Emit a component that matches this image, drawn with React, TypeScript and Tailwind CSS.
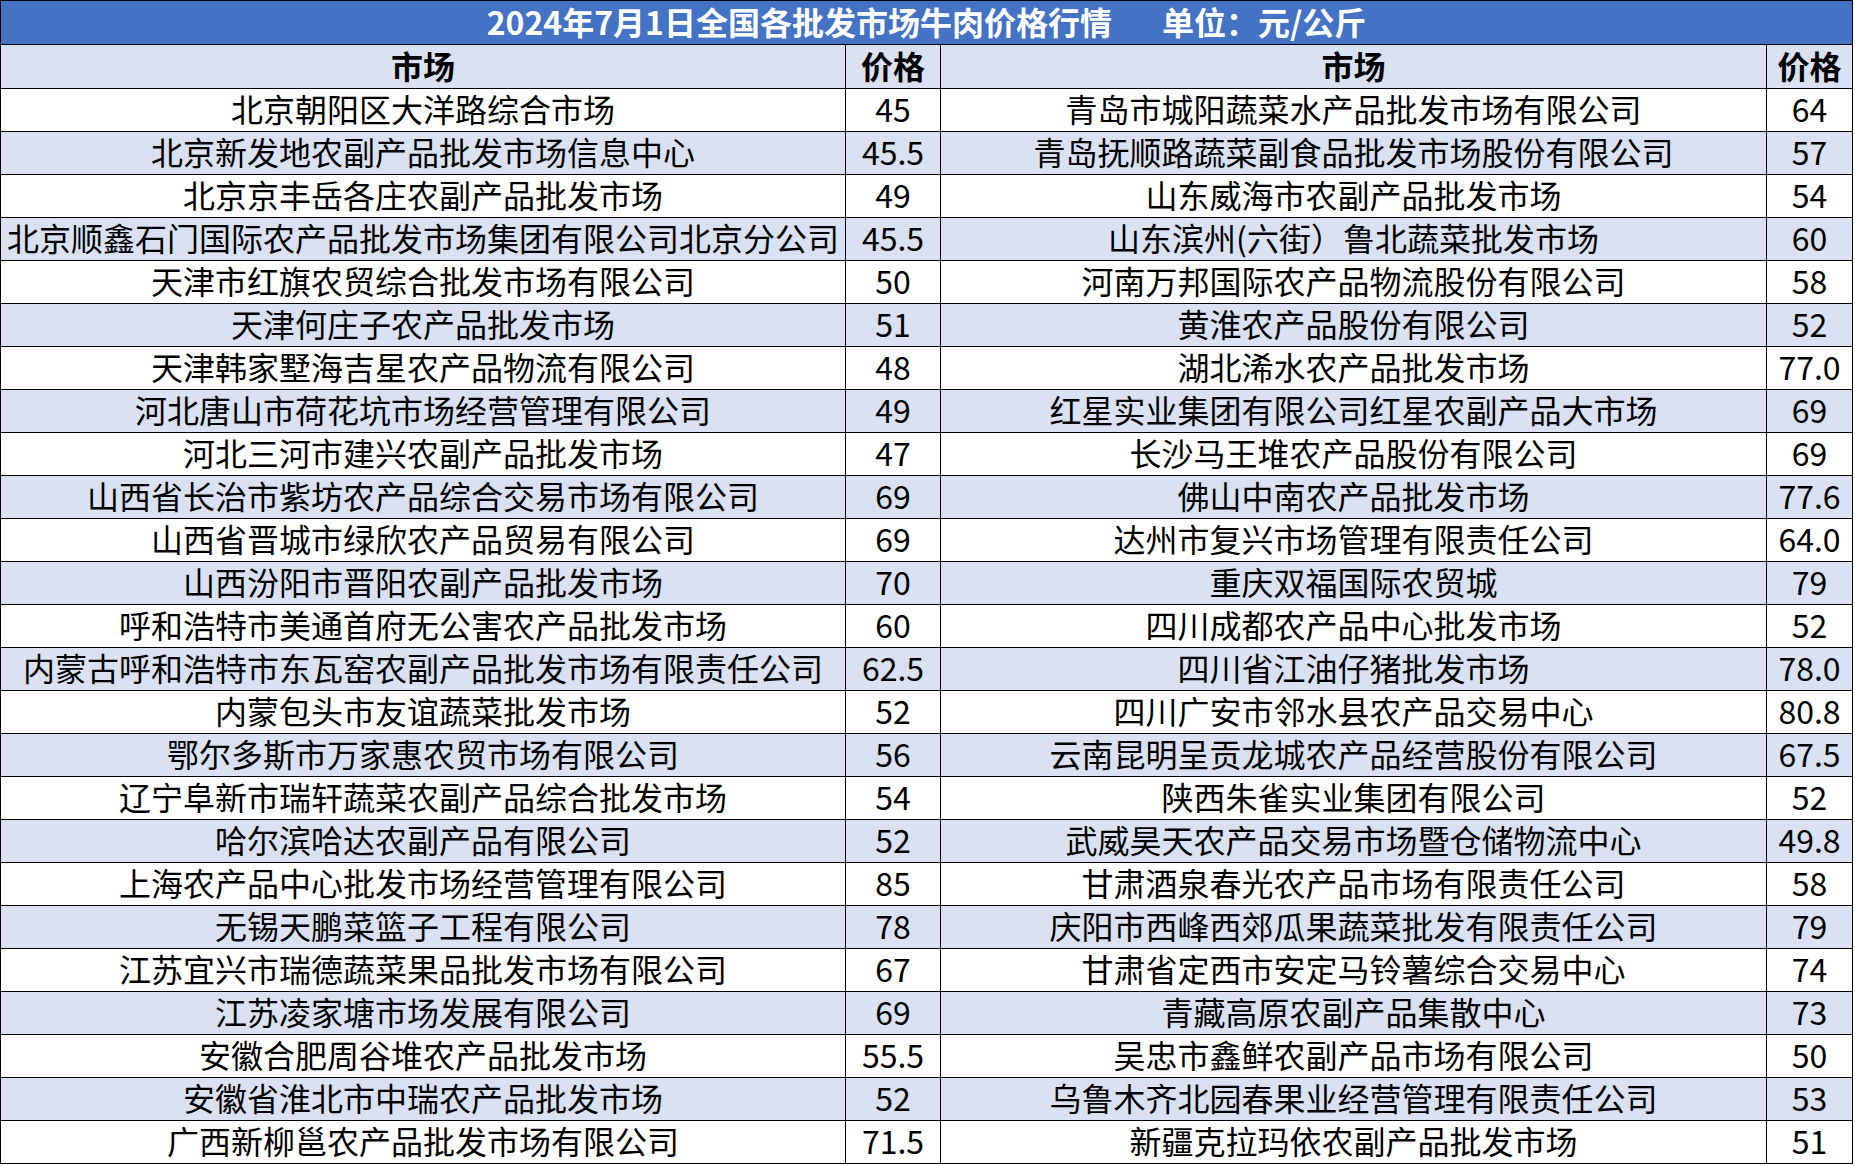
const rows: [string, string, string, string][] = [
  ['北京朝阳区大洋路综合市场', '45', '青岛市城阳蔬菜水产品批发市场有限公司', '64'],
  ['北京新发地农副产品批发市场信息中心', '45.5', '青岛抚顺路蔬菜副食品批发市场股份有限公司', '57'],
  ['北京京丰岳各庄农副产品批发市场', '49', '山东威海市农副产品批发市场', '54'],
  ['北京顺鑫石门国际农产品批发市场集团有限公司北京分公司', '45.5', '山东滨州(六街）鲁北蔬菜批发市场', '60'],
  ['天津市红旗农贸综合批发市场有限公司', '50', '河南万邦国际农产品物流股份有限公司', '58'],
  ['天津何庄子农产品批发市场', '51', '黄淮农产品股份有限公司', '52'],
  ['天津韩家墅海吉星农产品物流有限公司', '48', '湖北浠水农产品批发市场', '77.0'],
  ['河北唐山市荷花坑市场经营管理有限公司', '49', '红星实业集团有限公司红星农副产品大市场', '69'],
  ['河北三河市建兴农副产品批发市场', '47', '长沙马王堆农产品股份有限公司', '69'],
  ['山西省长治市紫坊农产品综合交易市场有限公司', '69', '佛山中南农产品批发市场', '77.6'],
  ['山西省晋城市绿欣农产品贸易有限公司', '69', '达州市复兴市场管理有限责任公司', '64.0'],
  ['山西汾阳市晋阳农副产品批发市场', '70', '重庆双福国际农贸城', '79'],
  ['呼和浩特市美通首府无公害农产品批发市场', '60', '四川成都农产品中心批发市场', '52'],
  ['内蒙古呼和浩特市东瓦窑农副产品批发市场有限责任公司', '62.5', '四川省江油仔猪批发市场', '78.0'],
  ['内蒙包头市友谊蔬菜批发市场', '52', '四川广安市邻水县农产品交易中心', '80.8'],
  ['鄂尔多斯市万家惠农贸市场有限公司', '56', '云南昆明呈贡龙城农产品经营股份有限公司', '67.5'],
  ['辽宁阜新市瑞轩蔬菜农副产品综合批发市场', '54', '陕西朱雀实业集团有限公司', '52'],
  ['哈尔滨哈达农副产品有限公司', '52', '武威昊天农产品交易市场暨仓储物流中心', '49.8'],
  ['上海农产品中心批发市场经营管理有限公司', '85', '甘肃酒泉春光农产品市场有限责任公司', '58'],
  ['无锡天鹏菜篮子工程有限公司', '78', '庆阳市西峰西郊瓜果蔬菜批发有限责任公司', '79'],
  ['江苏宜兴市瑞德蔬菜果品批发市场有限公司', '67', '甘肃省定西市安定马铃薯综合交易中心', '74'],
  ['江苏凌家塘市场发展有限公司', '69', '青藏高原农副产品集散中心', '73'],
  ['安徽合肥周谷堆农产品批发市场', '55.5', '吴忠市鑫鲜农副产品市场有限公司', '50'],
  ['安徽省淮北市中瑞农产品批发市场', '52', '乌鲁木齐北园春果业经营管理有限责任公司', '53'],
  ['广西新柳邕农产品批发市场有限公司', '71.5', '新疆克拉玛依农副产品批发市场', '51'],
];

const cell = 'border border-black p-0 pb-[4px] text-center whitespace-nowrap';

export default function App() {
  return (
    <div className="bg-white min-h-screen font-['Noto_Sans_CJK_SC','Noto_Sans',sans-serif] text-black">
      <table className="table-fixed border-collapse w-[1852px] leading-none">
        <colgroup>
          <col className="w-[845px]" />
          <col className="w-[95px]" />
          <col className="w-[826px]" />
          <col className="w-[86px]" />
        </colgroup>
        <thead>
          <tr className="h-[44px] bg-[#4472c4]">
            <th colSpan={4} className={`${cell} text-white text-[32px] font-bold`}>
              2024年7月1日全国各批发市场牛肉价格行情
              <span className="ml-[50px]">单位：元/公斤</span>
            </th>
          </tr>
          <tr className="h-[44px] bg-[#d9e1f2] text-[32px] font-bold">
            <th className={cell}>市场</th>
            <th className={cell}>价格</th>
            <th className={cell}>市场</th>
            <th className={cell}>价格</th>
          </tr>
        </thead>
        <tbody>
          {rows.map((r, i) => (
            <tr
              key={i}
              className={`h-[43px] text-[32px] ${i % 2 === 1 ? 'bg-[#d9e1f2]' : 'bg-white'}`}
            >
              <td className={cell}>{r[0]}</td>
              <td className={cell}>{r[1]}</td>
              <td className={cell}>{r[2]}</td>
              <td className={cell}>{r[3]}</td>
            </tr>
          ))}
        </tbody>
      </table>
    </div>
  );
}
